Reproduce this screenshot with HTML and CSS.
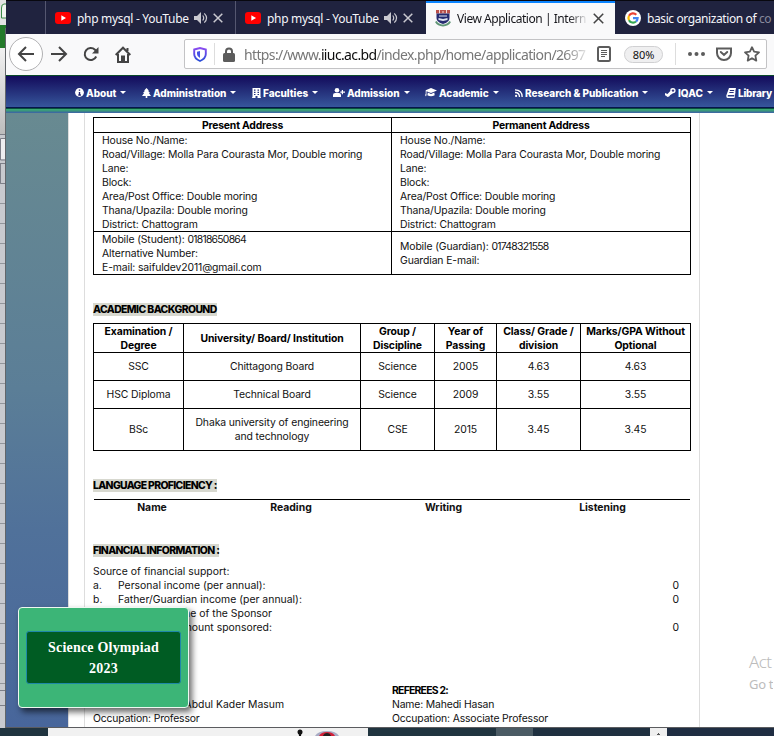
FILE: index.html
```html
<!DOCTYPE html>
<html lang="en">
<head>
<meta charset="utf-8">
<title>View Application</title>
<link rel="stylesheet" href="styles.css">
</head>
<body>
<div class="desktop">
  <div class="behind">
    <svg width="6" height="728" viewBox="0 0 6 728">
      <defs><linearGradient id="lg" x2="0" y2="1"><stop offset="0" stop-color="#f1f1f1"/><stop offset="1" stop-color="#bdbdbd"/></linearGradient>
      <pattern id="rows" width="6" height="20" patternUnits="userSpaceOnUse" y="3"><path d="M0 .5h6" stroke="#92959b"/></pattern></defs>
      <path fill="#e3e3e3" d="M0 0h6v26H0z"/><path d="M6 4H4Q1.500 4 1.500 8v10H6" fill="#f2f6f0" stroke="#3d8b48"/>
      <path fill="#237a2a" d="M0 25h6v23H0z"/><path fill="url(#lg)" d="M0 48h6v86H0z"/>
      <path fill="#c8cacf" d="M0 134h6v594H0z"/><path fill="url(#rows)" d="M0 182h6v512H0z"/>
      <path fill="none" stroke="#7d7f88" d="M0 134.500h6M6 138.500H.5V160H6M0 163.500h6M.5 164v19.500H6M0 690.500h6M0 705.500h6"/>
      <path fill="#eeeef0" d="M1 139h5v20H1z"/>
      <path fill="#62666a" d="M5 28h1v700H5z"/>
    </svg>
  </div>
  <div class="window">
    <div class="tabs">
      <div class="tab stub"></div>
      <div class="tab yt"><svg class="fav" width="16" height="16" viewBox="0 0 16 16"><rect y="2" width="16" height="12" rx="3" fill="#f00"/><path fill="#fff" d="M6.300 5.300v5.400L11 8z"/></svg><span class="tt">php mysql - YouTube</span><svg class="snd" width="14" height="14" viewBox="0 0 14 14"><path fill="#c9c9d0" d="M0 5h3l4-4v12L3 9H0z"/><path fill="none" stroke="#c9c9d0" stroke-width="1.200" d="M8.700 4.500q2 2.500 0 5M10.300 2.300q4.500 4.700 0 9.400"/></svg><svg class="x" width="10" height="10" viewBox="0 0 10 10"><path stroke="#c9c9d0" stroke-width="1.500" d="M.7.700l8.600 8.600M9.300.700L.7 9.300"/></svg></div>
      <div class="tab yt"><svg class="fav" width="16" height="16" viewBox="0 0 16 16"><rect y="2" width="16" height="12" rx="3" fill="#f00"/><path fill="#fff" d="M6.300 5.300v5.400L11 8z"/></svg><span class="tt">php mysql - YouTube</span><svg class="snd" width="14" height="14" viewBox="0 0 14 14"><path fill="#c9c9d0" d="M0 5h3l4-4v12L3 9H0z"/><path fill="none" stroke="#c9c9d0" stroke-width="1.200" d="M8.700 4.500q2 2.500 0 5M10.300 2.300q4.500 4.700 0 9.400"/></svg><svg class="x" width="10" height="10" viewBox="0 0 10 10"><path stroke="#c9c9d0" stroke-width="1.500" d="M.7.700l8.600 8.600M9.300.700L.7 9.300"/></svg></div>
      <div class="tab active"><svg class="crest" width="16" height="17" viewBox="0 0 16 17"><path fill="#b9504b" d="M1 0h14v3.500H1z"/><path stroke="#f4dcda" d="M4.500 0v4M8 1v2M11.500 0v4"/><path fill="#252a70" d="M1.500 3.500h13V8q0 4-6.500 6Q1.500 12 1.500 8z"/><path fill="#dfe3ef" d="M4 5.500h8v1H4zM3.500 8L8 9l4.500-1v2L8 11l-4.500-1z"/><path fill="none" stroke="#609676" stroke-width="2" d="M.8 11.500Q3 15.500 8 15.500t7.200-4"/></svg><span class="tt fade">View Application | Intern</span><svg class="x" width="11" height="11" viewBox="0 0 10 10"><path stroke="#444" stroke-width="1.400" d="M.7.700l8.600 8.600M9.300.700L.7 9.300"/></svg></div>
      <div class="tab goog"><svg class="fav" width="16" height="16" viewBox="0 0 16 16"><circle cx="8" cy="8" r="8" fill="#fff"/><g fill="none" stroke-width="2.200"><path stroke="#ea4335" d="M4 5.800A4.600 4.600 0 0 1 11.300 4.700"/><path stroke="#fbbc05" d="M4 5.800A4.800 4.800 0 0 0 4 10.200"/><path stroke="#34a853" d="M4 10.200A4.600 4.600 0 0 0 11 11.500"/><path stroke="#4285f4" d="M8 8.200h4.600Q12.500 10.300 11 11.500"/></g></svg><span class="tt">basic organization of <i>co</i></span></div>
    </div>
    <div class="toolbar">
      <div class="back"><svg width="18" height="16" viewBox="0 0 18 16"><path d="M9 1L2 8l7 7M2.500 8H17"/></svg></div>
      <svg class="fwd" width="18" height="16" viewBox="0 0 18 16"><path d="M9 1l7 7-7 7M15.500 8H1"/></svg>
      <svg class="reload" width="16" height="16" viewBox="0 0 16 16"><path d="M13.200 10.500A6 6 0 1 1 12 3.800L14 6"/><path class="fill" d="M15.500 1v6.500H9z"/></svg>
      <svg class="home" width="16" height="17" viewBox="0 0 16 17"><path d="M.7 9L8 1.700 15.300 9M3 8v8h10V8M12.500 5V2"/><path class="fill" d="M6 9.500h4V16H6z"/></svg>
      <div class="urlbar">
        <svg class="shield" width="14" height="15" viewBox="0 0 14 15"><defs><linearGradient id="sg" x2="0" y2="1"><stop stop-color="#8a4bf0"/><stop offset="1" stop-color="#2a4fd8"/></linearGradient></defs><path fill="none" stroke="url(#sg)" stroke-width="1.900" d="M1.200 2.500L7 1l5.800 1.500V7q0 4.500-5.800 7Q1.200 11.500 1.200 7z"/><path fill="#4552e6" d="M7 4v7Q4 9.500 4 7V4.700z"/></svg>
        <i class="sep"></i>
        <svg class="lock" width="12" height="15" viewBox="0 0 12 15"><path fill="none" stroke="#5c5c5c" stroke-width="2" d="M3 7V4.500a3 3 0 0 1 6 0V7"/><rect y="6" width="12" height="9" rx="1.500" fill="#5c5c5c"/></svg>
        <span class="url">https://www.<b>iiuc.ac.bd</b>/index.php/home/application/2697</span>
        <svg class="reader" width="14" height="16" viewBox="0 0 14 16"><rect x="1" y="1" width="12" height="14" rx="1.500" fill="none" stroke="#5c5c5c" stroke-width="2"/><path stroke="#5c5c5c" d="M4 4.500h6M4 6.500h6M4 8.500h6M4 10.500h4"/></svg>
        <span class="zoom">80%</span>
        <i class="sep"></i>
        <svg class="dots" width="17" height="4" viewBox="0 0 17 4"><g fill="#5c5c5c"><circle cx="2" cy="2" r="2"/><circle cx="8.500" cy="2" r="2"/><circle cx="15" cy="2" r="2"/></g></svg>
        <svg class="pocket" width="16" height="14" viewBox="0 0 16 14"><path fill="none" stroke="#5c5c5c" stroke-width="2" d="M1 1.500h14V6a7 7 0 0 1-14 0z"/><path fill="none" stroke="#5c5c5c" stroke-width="2" stroke-linecap="round" d="M4.800 5L8 8l3.200-3"/></svg>
        <svg class="star" width="16" height="16" viewBox="0 0 16 16"><path fill="none" stroke="#5c5c5c" stroke-width="1.800" stroke-linejoin="round" d="M8 1.200l2.100 4.500 4.900.6-3.600 3.400.9 4.900L8 12.200l-4.300 2.400.9-4.900L1 6.300l4.900-.6z"/></svg>
      </div>
    </div>
    <nav class="nav">
      <a><svg width="9" height="9" viewBox="0 0 9 9"><circle cx="4.500" cy="4.500" r="4.400" fill="#fff"/><path stroke="#1d1d6b" stroke-width="1.400" d="M4.500 1.500v1.300M4.500 4v3.300M3.300 7h2.600"/></svg><span>About</span></a>
      <a><svg width="9" height="10" viewBox="0 0 9 10"><path fill="#fff" d="M4.500 0L7 2.700H6L8 5H6.900L9 8H5.300v2H3.700V8H0l2.100-3H1l2-2.300H2z"/></svg><span>Administration</span></a>
      <a><svg width="9" height="10" viewBox="0 0 9 10"><path fill="#fff" fill-rule="evenodd" d="M.5 0h8v9.300H9v.7H5.500V8h-2v2H0v-.7h.5zM2 1.500v1.200h1.500V1.500zM5.500 1.500v1.200H7V1.500zM2 3.700v1.200h1.500V3.700zM5.500 3.700v1.200H7V3.700zM2 5.900V7h1.500V5.900zM5.500 5.900V7H7V5.900z"/></svg><span>Faculties</span></a>
      <a><svg width="12" height="9" viewBox="0 0 12 9"><g fill="#fff"><circle cx="4" cy="2.300" r="2.300"/><path d="M0 9V7q0-2 2.200-2h3.600Q8 5 8 7v2zM8.800 2h1.200v1.500H12v1.300h-2v1.500H8.800V4.800H7.300V3.500h1.500z"/></g></svg><span>Admission</span></a>
      <a><svg width="12" height="9" viewBox="0 0 12 9"><path fill="#fff" d="M6 0l6 2.500L6 5 1.500 3.200V7L1 8.500 0 7l.7-1V2.300zM2.800 4.600L6 6l3.300-1.400.4 2.600Q6 9.500 2.400 7.200z"/></svg><span>Academic</span></a>
      <a><svg width="8" height="8" viewBox="0 0 8 8"><circle cx="1.100" cy="6.900" r="1.100" fill="#fff"/><path fill="none" stroke="#fff" stroke-width="1.300" d="M0 3.500Q4.500 3.500 4.500 8M0 .8Q7.200.8 7.200 8"/></svg><span>Research &amp; Publication</span></a>
      <a><svg width="11" height="9" viewBox="0 0 11 9"><path fill="#fff" d="M8 0a2.600 2.600 0 0 1 0 5.200L5 7.300A2 2 0 0 1 1.400 8L0 7.200V5L2.500 6 5.300 3A2.700 2.700 0 0 1 8 0z"/><circle cx="8" cy="2.600" r="1.200" fill="#3a3a83"/></svg><span>IQAC</span></a>
      <a class="last"><svg width="10" height="10" viewBox="0 0 10 10"><path fill="#fff" fill-rule="evenodd" d="M3 0h7L8.500 7H2q-.8 1 0 1.500h6L9.500 3v1L8.500 10H1.500Q0 9.500.3 7.500zM4 2l-.3 1H8l.3-1zM3.500 4l-.3 1h4.300l.3-1z"/></svg><span>Library</span></a>
    </nav>
    <div class="lines"></div>
    <div class="view">
      <div class="side"></div>
      <div class="sheet">
        <div class="paper">
          <div class="addr bx">
            <div class="hd">Present Address</div><div class="hd">Permanent Address</div>
            <div class="l">House No./Name:<br>Road/Village: Molla Para Courasta Mor, Double moring<br>Lane:<br>Block:<br>Area/Post Office: Double moring<br>Thana/Upazila: Double moring<br>District: Chattogram</div>
            <div class="l">House No./Name:<br>Road/Village: Molla Para Courasta Mor, Double moring<br>Lane:<br>Block:<br>Area/Post Office: Double moring<br>Thana/Upazila: Double moring<br>District: Chattogram</div>
            <div class="l"><p>Mobile (Student): <span class="num">01818650864</span><br>Alternative Number:<br>E-mail: saifuldev2011@gmail.com</p></div>
            <div class="l"><p>Mobile (Guardian): <span class="num">01748321558</span><br>Guardian E-mail:</p></div>
          </div>
          <h4 class="h1">ACADEMIC BACKGROUND</h4>
          <div class="acad bx">
            <div class="hd">Examination /<br>Degree</div><div class="hd">University/ Board/ Institution</div><div class="hd">Group /<br>Discipline</div><div class="hd">Year of<br>Passing</div><div class="hd">Class/ Grade /<br>division</div><div class="hd">Marks/GPA Without<br>Optional</div>
            <div>SSC</div><div>Chittagong Board</div><div>Science</div><div>2005</div><div>4.63</div><div>4.63</div>
            <div>HSC Diploma</div><div>Technical Board</div><div>Science</div><div>2009</div><div>3.55</div><div>3.55</div>
            <div>BSc</div><div>Dhaka university of engineering<br>and technology</div><div>CSE</div><div>2015</div><div>3.45</div><div>3.45</div>
          </div>
          <h4 class="h2">LANGUAGE PROFICIENCY :</h4>
          <div class="lang"><div>Name</div><div>Reading</div><div>Writing</div><div>Listening</div></div>
          <h4 class="h3">FINANCIAL INFORMATION :</h4>
          <div class="fin">
            <p>Source of financial support:</p>
            <p><span class="n">a.</span><span>Personal income (per annual):</span><span class="v">0</span></p>
            <p><span class="n">b.</span><span>Father/Guardian income (per annual):</span><span class="v">0</span></p>
            <p><span class="cut">Name of the Sponsor</span></p>
            <p><span class="cut">Amount sponsored:</span><span class="v">0</span></p>
          </div>
          <div class="refs">
            <div><p>&nbsp;</p><p><span class="cut2">Abdul Kader Masum</span></p><p>Occupation: Professor</p></div>
            <div><p class="b">REFEREES 2:</p><p>Name: Mahedi Hasan</p><p>Occupation: Associate Professor</p></div>
          </div>
        </div>
        <div class="rest"><div class="act">Act</div><div class="go">Go t</div></div>
      </div>
    </div>
  </div>
  <div class="taskbar"><div class="start"></div><div class="search"><svg width="60" height="7" viewBox="0 0 60 7"><circle cx="5" cy="3" r="2.500" fill="#111"/><path fill="#111" d="M3.500 3h3l-.5 4H4z"/><path fill="#a8abc4" d="M20 7q3-5 12-5t12 5z"/><path fill="#d31f37" d="M24 7q2-4 8-4t8 4z"/><path fill="#252020" d="M28 7q1-3 4-3t4 3z"/></svg></div><div class="mid"></div><div class="task"></div><div class="mid2"></div><div class="white"><svg width="5" height="4" viewBox="0 0 5 4"><path fill="#555" d="M2 1h1v1h1v1H1V2h1z"/></svg></div></div>
  <div class="popup"><div>Science Olympiad<br>2023</div></div>
</div>
</body>
</html>
```
FILE: styles.css
```css
* { box-sizing: border-box; }
body { margin: 0; background: #fff; }
svg { display: block; flex: none; }
p, h4 { margin: 0; }
.desktop { position: relative; width: 774px; height: 736px; overflow: hidden; display: grid; grid-template: 728px 8px / 6px 768px; font-family: Inter, "Liberation Sans", sans-serif; }
.window { display: flex; flex-direction: column; border-bottom: 1px solid #5b5c5f; min-width: 0; overflow: hidden; }

/* Browser tabs */
.tabs { height: 34px; flex: none; display: flex; background: #20233f; border-top: 1px solid #08080f; font: 12px "Noto Sans", sans-serif; letter-spacing: -.3px; color: #f5f5fa; overflow: hidden; }
.tab { display: flex; align-items: center; flex: none; white-space: nowrap; padding-top: 1px; }
.stub { width: 39px; }
.yt { width: 190px; padding-left: 9px; border-left: 1px solid #555770; }
.yt + .yt { width: 191px; }
.tt { margin-left: 6px; width: 117px; }
.yt .x { margin-left: 5px; }
.active { width: 189px; padding-left: 9px; background: #f9f9fa; color: #15151a; border-top: 2px solid #0a84ff; padding-top: 0; }
.active .tt { width: 131px; margin-right: 5px; letter-spacing: -.46px; }
.fade { -webkit-mask-image: linear-gradient(90deg, #000 85%, transparent); mask-image: linear-gradient(90deg, #000 85%, transparent); }
.goog { padding-left: 10px; }
.goog .tt { letter-spacing: -.4px; }
.goog i { font-style: normal; color: #888a9c; }

/* Address toolbar */
.toolbar { height: 41px; flex: none; display: flex; align-items: center; background: #f9f9fa; padding: 0 0 1px 3px; }
.toolbar > svg path, .back path { fill: none; stroke: #444; stroke-width: 2; }
.toolbar > svg .fill { fill: #444; stroke: none; }
.back { width: 34px; height: 34px; border: 1px solid #b1b1b3; border-radius: 50%; background: #fff; display: grid; place-items: center; }
.fwd { margin-left: 7px; }
.reload { margin-left: 15px; }
.home { margin-left: 16px; }
.urlbar { margin-left: 53px; width: 583px; height: 30px; border: 1px solid #c3c3c5; border-radius: 2px; background: #fff; display: flex; align-items: center; padding-left: 8px; }
.sep { width: 1px; height: 22px; background: #ddd; }
.shield { margin-right: 7px; }
.lock { margin: 0 9px 0 8px; }
.url { width: 344px; flex: none; white-space: nowrap; font: 14px "Noto Sans", sans-serif; letter-spacing: -.63px; color: #777; -webkit-mask-image: linear-gradient(90deg, #000 93%, transparent 101%); mask-image: linear-gradient(90deg, #000 93%, transparent 101%); }
.url b { font-weight: 400; color: #0c0c0d; }
.reader { margin-left: 9px; }
.zoom { margin: 0 12px 0 13px; width: 39px; height: 17px; border: 1px solid #d0d0d2; border-radius: 9px; background: #efeff0; font: 11px/15px "Noto Sans", sans-serif; text-align: center; color: #111; }
.dots { margin-left: 12px; }
.pocket { margin-left: 11px; }
.star { margin-left: 12px; }

/* Site navigation */
.nav { height: 32px; flex: none; border-top: 1px solid #0a4a2a; background: linear-gradient(#130b5b, #36569b); padding-left: 69px; display: grid; grid-template-columns: 67px 110px 81px 92px 90px 150px 61px 60px; align-items: center; overflow: hidden; }
.nav a { display: flex; align-items: center; color: #fff; font-size: 10px; font-weight: 800; white-space: nowrap; padding-top: 2px; letter-spacing: -.02px; }
.nav span { margin-left: 2px; }
.nav a::after { content: ""; border: 3px solid transparent; border-top-color: #fff; border-bottom: 0; margin-left: 4px; }
.nav .last::after { display: none; }
.nav .last { letter-spacing: -.2px; }
.lines { height: 6px; flex: none; background: linear-gradient(#07154b 0 1px, #07503c 1px 2px, #3ba873 2px 3px, #3b9a7c 3px 4px, #3b8289 4px 5px, #3d6b9f 5px); }

/* Document */
.view { flex: 1; display: flex; min-height: 0; overflow: hidden; }
.side { width: 62px; flex: none; background: linear-gradient(#688a91, #5b7e97 45%, #50719a 68%, #48669b); }
.sheet { flex: 1; display: flex; background: #fff; border-left: 1px solid #ddd; min-width: 0; }
.paper { margin-left: 15px; width: 616px; flex: none; border: solid #ddd; border-width: 0 1px; padding: 4px 8px 0; font-size: 10.400px; line-height: 14px; color: #111; }
.bx { display: grid; border: solid #000; border-width: 1px 0 0 1px; width: 598px; white-space: nowrap; }
.bx > div { border: solid #000; border-width: 0 1px 1px 0; }
.hd { font-weight: 700; color: #000; letter-spacing: -.06px; }
.paper .b { font-weight: 700; color: #000; letter-spacing: -.75px; }
.addr { grid-template: 15px 99px 43px / 298px 299px; letter-spacing: -.12px; }
.addr .hd { text-align: center; letter-spacing: -.2px; padding-top: 1px; line-height: 13px; }
.addr .l { padding: 1px 0 0 8px; display: flex; align-items: center; line-height: 14px; }
.num { letter-spacing: -.75px; }
.acad { grid-template: 29px 28px 28px 42px / 90px 177px 74px 62px 84px 110px; }
.acad > div { display: grid; place-items: center; text-align: center; padding-top: 1px; letter-spacing: -.1px; }
h4 { font-size: 10.400px; line-height: 14px; font-weight: 800; color: #000; background: #d7d8cf; height: 13px; white-space: nowrap; }
.h1 { width: 124px; margin: 28px 0 7px; letter-spacing: -.58px; }
.h2 { width: 124px; margin: 28px 0 7px; letter-spacing: -.65px; }
.h3 { width: 126px; margin: 29px 0 8px; letter-spacing: -.62px; }
.lang { border-top: 1px solid #000; margin-left: 1px; width: 596px; height: 16px; padding-top: 1px; font-weight: 700; display: grid; grid-template-columns: 116px 162px 143px 175px; text-align: center; }
.fin p { display: flex; height: 14px; white-space: nowrap; }
.fin { letter-spacing: .02px; }
.n { width: 25px; }
.v { margin-left: auto; margin-right: 12px; }
.cut { width: 179px; text-align: right; }
.refs { margin-top: 49px; display: grid; grid-template-columns: 299px 299px; white-space: nowrap; letter-spacing: -.15px; }
.cut2 { display: block; width: 191px; text-align: right; letter-spacing: 0; }
.rest { padding: 537px 0 0 49px; overflow: hidden; white-space: nowrap; font-family: "Noto Sans", sans-serif; color: #bcbcbc; }
.act { font-size: 17px; line-height: 24px; letter-spacing: -.6px; font-weight: 300; }
.go { font-size: 13px; line-height: 20px; letter-spacing: -.3px; }

/* Taskbar */
.taskbar { grid-column: 1 / 3; display: flex; background: #1f2d42; }
.start, .mid, .mid2 { background: #20343f; }
.start { width: 48px; }
.search { width: 320px; background: #f1f1f1; padding: 1px 0 0 247px; }
.mid { width: 128px; }
.task { width: 37px; background: #4b5b64; }
.mid2 { width: 117px; background: #1f3040; }
.white { width: 17px; background: #efefef; padding: 4px 0 0 6px; }

/* Event popup */
.popup { position: absolute; left: 18px; top: 607px; width: 171px; height: 101px; border: 1px solid #eef8f1; border-radius: 4px; background: #3cb577; box-shadow: 3px 4px 6px rgba(0, 0, 0, .6); padding: 23px 7px; }
.popup div { height: 53px; border: 1px solid #1e88a8; border-radius: 3px; background: #005c23; color: #fff; font: bold 14px/21px "Liberation Serif", serif; letter-spacing: .2px; text-align: center; padding-top: 5px; }
```
